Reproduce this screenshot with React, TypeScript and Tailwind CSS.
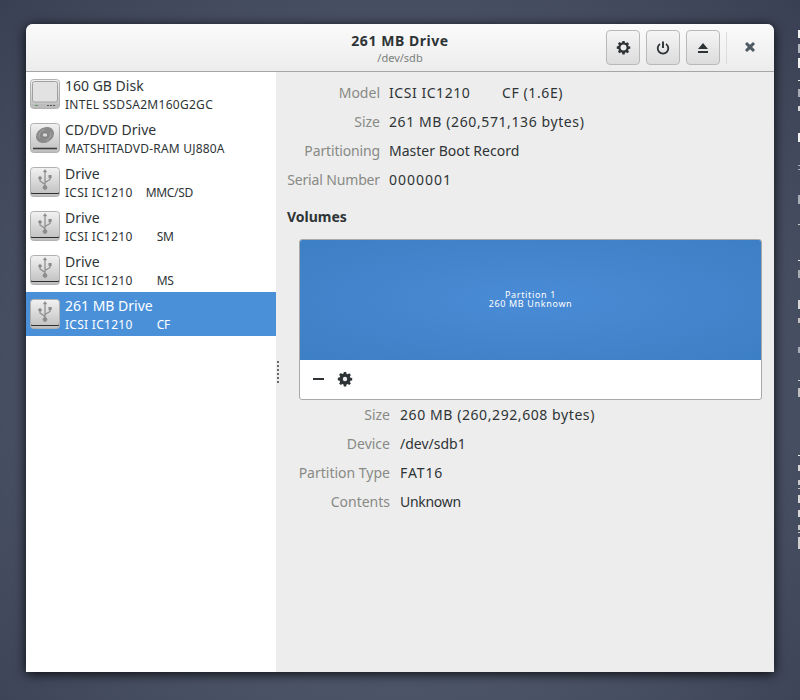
import React from "react";

const font = "font-['Noto_Sans','Open_Sans',sans-serif]";

function Gear({ size = 16, hole = 3 }: { size?: number; hole?: number }) {
  return (
    <svg width={size} height={size} viewBox="0 0 16 16">
      <path
        fill="#2e3436"
        d="M6.8 1h2.4l.3 1.800 1.200.5 1.500-1 1.700 1.700-1 1.500.5 1.200 1.800.3v2.400l-1.800.3-.5 1.200 1 1.500-1.700 1.700-1.500-1-1.200.5-.3 1.800H6.800l-.3-1.800-1.200-.5-1.500 1-1.700-1.700 1-1.500-.5-1.200L.8 9.200V6.800l1.800-.3.5-1.200-1-1.500 1.700-1.700 1.500 1 1.200-.5z"
      />
      <circle cx="8" cy="8" r={hole} fill="#ececec" />
    </svg>
  );
}

function HeaderButton({ children }: { children: React.ReactNode }) {
  return (
    <button className="w-[34px] h-[35px] flex items-center justify-center rounded-[4px] border border-[#b9b9b9] bg-gradient-to-b from-[#f5f5f5] to-[#dcdcdc]">
      {children}
    </button>
  );
}

function DriveIcon({ kind }: { kind: "hdd" | "cd" | "usb" }) {
  return (
    <svg width="30" height="30" viewBox="0 0 30 30" className="shrink-0">
      <defs>
        <linearGradient id={`g-${kind}`} x1="0" y1="0" x2="0" y2="1">
          <stop offset="0" stopColor="#f2f2f2" />
          <stop offset="1" stopColor="#bdbdbd" />
        </linearGradient>
      </defs>
      <rect x="0.5" y="0.5" width="29" height="29" rx="3" fill={`url(#g-${kind})`} stroke="#b0b0b0" />
      {kind === "hdd" && (
        <>
          <rect x="2.500" y="2.500" width="25" height="20.500" rx="2" fill="#e2e2e2" stroke="#a0a0a0" />
          <rect x="1" y="25" width="28" height="4" fill="#bcbcbc" />
          <rect x="5" y="26" width="3" height="1" fill="#5a9a5a" />
          <rect x="17" y="26" width="2" height="1" fill="#555" />
          <rect x="20" y="26" width="2" height="1" fill="#555" />
          <rect x="23" y="26" width="2" height="1" fill="#555" />
        </>
      )}
      {kind === "cd" && (
        <>
          <ellipse cx="15" cy="12" rx="9.500" ry="7.500" fill="#8a8a8a" transform="rotate(-30 15 12)" />
          <path d="M9.500 14.500c-1.500-3 1-7 4.500-8M20.500 9.500c1.500 3-1 7-4.500 8" stroke="#a8a8a8" strokeWidth="1" fill="none" />
          <ellipse cx="15" cy="12" rx="2.800" ry="2.200" fill="#d8d8d8" stroke="#555" strokeWidth="0.600" />
          <path d="M3 25.500h24" stroke="#3a3a3a" strokeWidth="1.500" />
        </>
      )}
      {kind === "usb" && (
        <>
          <g fill="#8c8c8c" stroke="#8c8c8c">
            <path d="M15 2.500l1.800 2.500h-3.600z" strokeWidth="0.500" />
            <path d="M15 5v15M15 17.500l-5-3.500v-2M15 15.500l5-3V10" fill="none" strokeWidth="1.200" />
            <circle cx="15" cy="20.500" r="1.900" />
            <circle cx="10" cy="11" r="1.300" />
            <rect x="19" y="8.500" width="2.100" height="2.100" />
          </g>
          <path d="M1 24.500c0 1 .6 1.500 1.500 1.500h25c.9 0 1.500-.5 1.500-1.500v1.800c0 .5-.5.7-1.500.7h-25c-1 0-1.500-.2-1.500-.7z" fill="#2f2f2f" />
        </>
      )}
    </svg>
  );
}

const drives: { kind: "hdd" | "cd" | "usb"; name: string; sub: string; extra?: string; ml?: string; sel?: boolean }[] = [
  { kind: "hdd", name: "160 GB Disk", sub: "INTEL SSDSA2M160G2GC" },
  { kind: "cd", name: "CD/DVD Drive", sub: "MATSHITADVD-RAM UJ880A" },
  { kind: "usb", name: "Drive", sub: "ICSI IC1210", extra: "MMC/SD", ml: "ml-[13px]" },
  { kind: "usb", name: "Drive", sub: "ICSI IC1210", extra: "SM", ml: "ml-[24px]" },
  { kind: "usb", name: "Drive", sub: "ICSI IC1210", extra: "MS", ml: "ml-[24px]" },
  { kind: "usb", name: "261 MB Drive", sub: "ICSI IC1210", extra: "CF", ml: "ml-[24px]", sel: true },
];

function InfoRow({
  label,
  value,
  labelW,
  gap = "gap-[9px]",
  track = "",
  labelTrack = "",
}: {
  label: string;
  value: React.ReactNode;
  labelW: string;
  gap?: string;
  track?: string;
  labelTrack?: string;
}) {
  return (
    <div className={`flex h-[29px] items-center ${gap} text-[14px]`}>
      <div className={`${labelW} shrink-0 flex justify-end whitespace-nowrap text-[#888a85] ${labelTrack}`}>{label}</div>
      <div className={`text-[#2e3436] whitespace-pre ${track}`}>{value}</div>
    </div>
  );
}

const edgeMarks: [number, number, string][] = [
  [30, 8, "#f2f2f2"], [44, 9, "#b0b4bc"], [58, 10, "#f2f2f2"], [80, 1, "#e8e8e8"], [89, 8, "#a8acb4"],
  [106, 5, "#d8d8d8"], [133, 9, "#f2f2f2"], [165, 1, "#a8acb4"], [169, 1, "#a8acb4"], [195, 9, "#a8acb4"],
  [224, 1, "#c8c8c8"], [260, 1, "#f2f2f2"], [270, 8, "#a8acb4"], [300, 9, "#d8d8d8"], [318, 5, "#c0c0c0"],
  [347, 6, "#a8acb4"], [380, 1, "#d0d0d0"], [388, 9, "#c0c0c0"], [455, 1, "#f2f2f2"], [465, 6, "#d8d8d8"],
  [480, 5, "#c8c8c8"], [488, 1, "#c8c8c8"], [495, 8, "#d8d8d8"], [510, 7, "#d8d8d8"], [525, 5, "#c8c8c8"],
  [532, 1, "#c8c8c8"], [537, 12, "#d0d0d0"],
];

export default function App() {
  return (
    <div
      className={`${font} relative w-[800px] h-[700px] overflow-hidden pl-[26px] pt-[24px] bg-[radial-gradient(ellipse_at_50%_55%,#667183_0%,#4c5568_55%,#3a4053_100%)]`}
    >
      {edgeMarks.map(([top, h, c], i) => (
        <div key={i} aria-hidden className="absolute left-[798px] w-[2px]" style={{ top, height: h, background: c }} />
      ))}
      <div className="w-[748px] h-[648px] flex flex-col rounded-t-[7px] overflow-hidden bg-[#ededed] shadow-[0_2px_12px_rgba(0,0,0,0.85)]">
        <header className="relative h-[48px] shrink-0 flex items-center border-b border-[#a6a6a6] bg-gradient-to-b from-[#fbfbfb] to-[#ececec]">
          <div className="flex-1 flex flex-col items-center pt-[1px]">
            <div className="text-[14px] leading-[17px] font-bold text-[#2e3436] tracking-[0.55px]">261 MB Drive</div>
            <div className="text-[11px] leading-[14px] mt-[2px] text-[#7b7f7b]">/dev/sdb</div>
          </div>
          <div className="absolute left-[580px] top-[6px] flex items-center gap-[6px]">
            <HeaderButton>
              <Gear size={15} hole={3.2} />
            </HeaderButton>
            <HeaderButton>
              <svg width="14" height="14" viewBox="0 0 14 14">
                <path d="M7 .5v6.500" stroke="#2e3436" strokeWidth="1.900" fill="none" />
                <path d="M4 2.900a5.300 5.300 0 106 0" stroke="#2e3436" strokeWidth="1.800" fill="none" />
              </svg>
            </HeaderButton>
            <HeaderButton>
              <svg width="12" height="12" viewBox="0 0 12 12">
                <path d="M6 1l5 6H1zM1 9h10v2H1z" fill="#2e3436" />
              </svg>
            </HeaderButton>
            <div className="w-px h-[32px] bg-[#dcdcdc]" />
            <div className="ml-[11px] mt-[-2px]">
              <svg width="12" height="12" viewBox="0 0 12 12">
                <path d="M1 3l2-2 3 2.800L9 1l2 2-2.800 3L11 9l-2 2-3-2.800L3 11 1 9l2.800-3z" fill="#4f5b63" />
              </svg>
            </div>
          </div>
        </header>
        <div className="flex-1 flex min-h-0">
          <aside className="w-[250px] shrink-0 bg-white">
            {drives.map((d, i) => (
              <div
                key={i}
                className={`h-[44px] flex items-center gap-[5px] pl-[4px] ${d.sel ? "bg-[#4a90d9] text-white" : "text-[#2e3436]"}`}
              >
                <DriveIcon kind={d.kind} />
                <div className="min-w-0 self-start pt-[4px]">
                  <div className="text-[14px] leading-[20px] whitespace-pre">{d.name}</div>
                  <div className={`flex text-[12px] leading-[17px] whitespace-pre ${i === 1 ? "tracking-[0.2px]" : "tracking-[0.28px]"}`}>
                    <span>{d.sub}</span>
                    {d.extra && <span className={`${d.ml} tracking-[-0.3px]`}>{d.extra}</span>}
                  </div>
                </div>
              </div>
            ))}
          </aside>
          <main className="relative flex-1 pl-[11px] pr-[12px] pt-[6px]">
            <div className="absolute left-[1px] top-[289px] flex flex-col gap-[2px]">
              {[0, 1, 2, 3, 4, 5].map((i) => (
                <div key={i} className="w-[2px] h-[2px] bg-[#6a6a6a]" />
              ))}
            </div>
            <InfoRow
              label="Model"
              labelW="w-[93px]"
              value={
                <span className="flex">
                  <span className="w-[113px] tracking-[0.55px]">ICSI IC1210</span>
                  <span className="tracking-[0.6px]">CF (1.6E)</span>
                </span>
              }
            />
            <InfoRow label="Size" value="261 MB (260,571,136 bytes)" labelW="w-[93px]" track="tracking-[0.6px]" />
            <InfoRow label="Partitioning" value="Master Boot Record" labelW="w-[93px]" labelTrack="tracking-[-0.15px]" />
            <InfoRow label="Serial Number" value="0000001" labelW="w-[93px]" track="tracking-[1px]" labelTrack="tracking-[-0.15px]" />
            <div className="mt-[13px] text-[14px] leading-[20px] font-bold text-[#2e3436]">Volumes</div>
            <div className="ml-[12px] mt-[12px] w-[463px] h-[161px] rounded-[3px] border border-[#a9a9a9] overflow-hidden bg-white">
              <div className="h-[120px] pb-[2px] flex flex-col items-center justify-center bg-[radial-gradient(ellipse_at_center,#4a8bd6_0%,#3d7fc4_100%)] text-white text-[9px] leading-[9px] tracking-[0.65px]">
                <div>Partition 1</div>
                <div>260 MB Unknown</div>
              </div>
              <div className="h-[39px] flex items-center gap-[13px] pl-[13px] pb-[1px]">
                <div className="w-[11px] h-[2px] bg-[#2e3436]" />
                <Gear size={16} hole={2.2} />
              </div>
            </div>
            <div className="ml-[12px]">
              <InfoRow label="Size" value="260 MB (260,292,608 bytes)" labelW="w-[91px]" gap="gap-[10px]" track="tracking-[0.58px]" />
              <InfoRow label="Device" value="/dev/sdb1" labelW="w-[91px]" gap="gap-[10px]" />
              <InfoRow label="Partition Type" value="FAT16" labelW="w-[91px]" gap="gap-[10px]" track="tracking-[0.9px]" />
              <InfoRow label="Contents" value="Unknown" labelW="w-[91px]" gap="gap-[10px]" track="tracking-[-0.3px]" />
            </div>
          </main>
        </div>
      </div>
    </div>
  );
}
